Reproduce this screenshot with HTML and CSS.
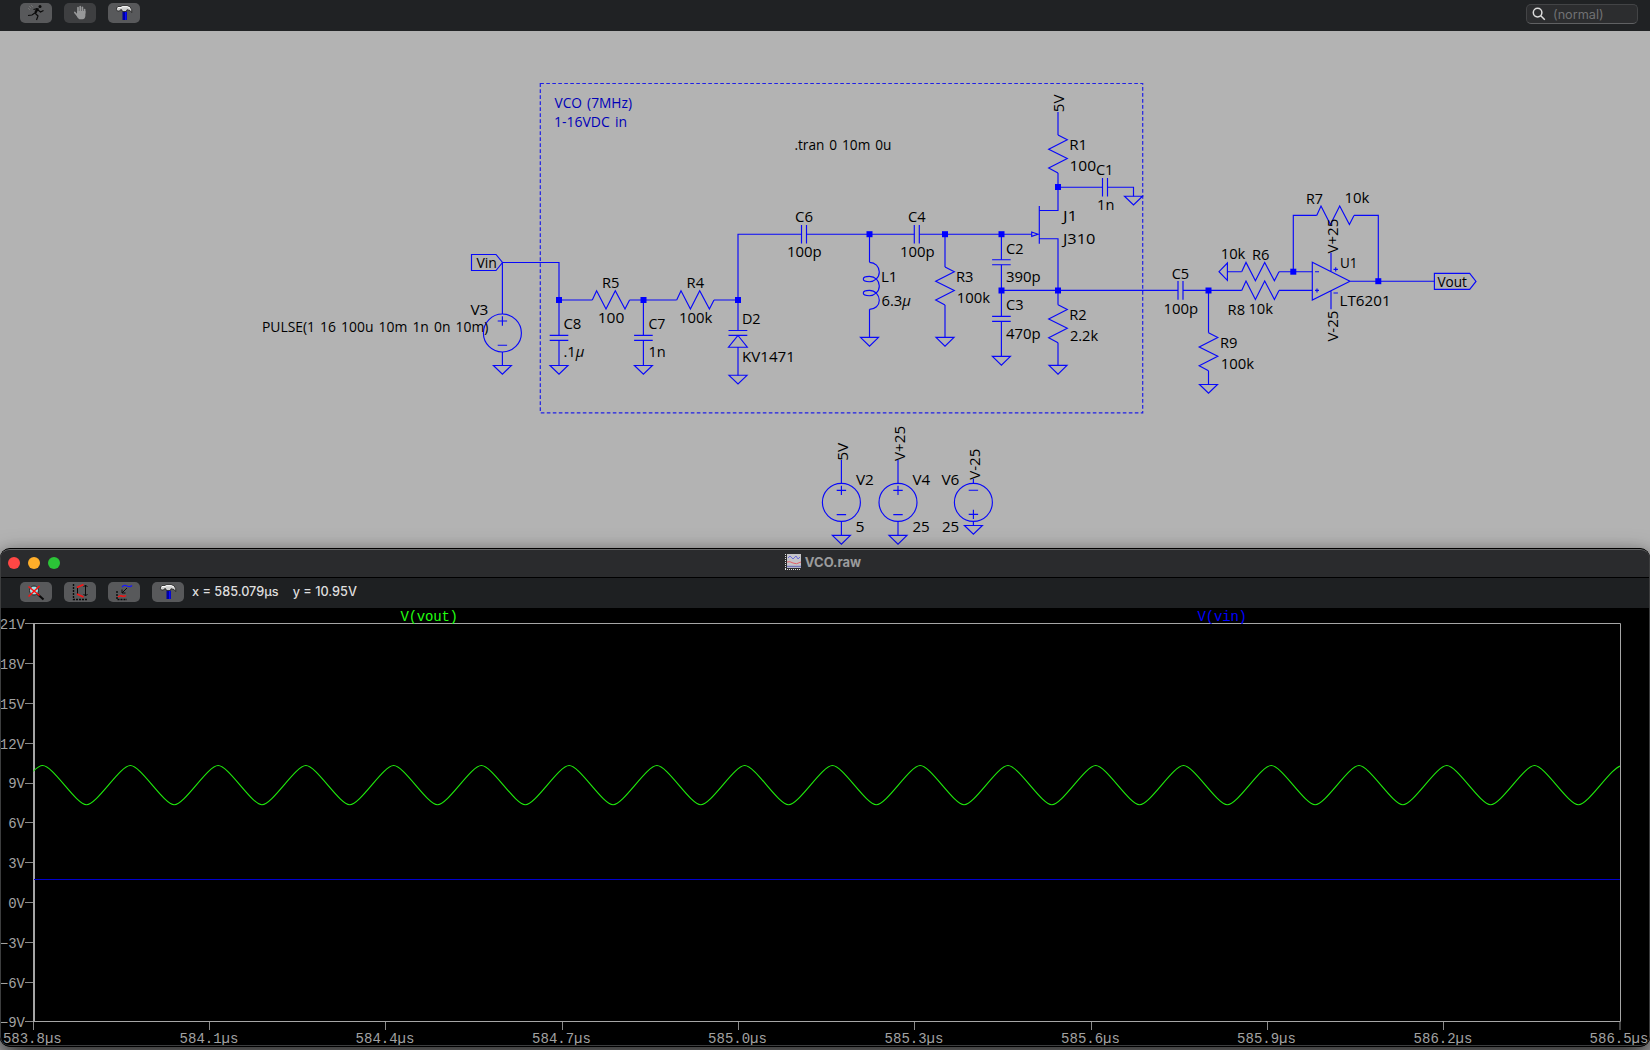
FILE: index.html
```html
<!DOCTYPE html>
<html lang="en">
<head>
<meta charset="utf-8">
<title>VCO</title>
<link rel="stylesheet" href="styles.css">
</head>
<body>
<svg class="defs" width="0" height="0" aria-hidden="true">
  <defs>
    <path id="gnd" d="M-9 0H9L0 8.7Z"/>
    <rect id="dot" x="-3" y="-3" width="6" height="6"/>
    <path id="resh" d="M0 0L4.3-9.3 13.7 9 23-9.3 32.7 9 37.3 0"/>
    <path id="resv" d="M0 0L9.3 4.8-9.3 14.2 9.3 23.6-9.3 33 0 38"/>
    <path id="caph" d="M0-9.3V9.3M5-9.3V9.3"/>
    <path id="capv" d="M-9.3 0H9.3M-9.3 5H9.3"/>
    <g id="src"><circle r="19"/><path d="M-4.7-12H4.7M0-16.7V-7.3M-4.7 12.2H4.7"/></g>
    <g id="hammer">
      <path d="M14.500 8.500h4.500v8.500h-4.500z" fill="#0000a0"/><path d="M17 9h1.500v8H17z" fill="#0a0aff"/>
      <path d="M8.500 5l1.500-1.500h3l1.500-.8h4.500q4 .5 4.700 4v2.800l-1.700-2-3-.8-.8 1.800h-3.700l-.8-1.800h-1.200l-1 1.300h-2l-1-1.300z" fill="#cfcfcf" stroke="#111" stroke-width=".7"/>
      <path d="M10 4.500h3l1.500-.8h5l2.500 1.500" fill="none" stroke="#fff"/>
    </g>
  </defs>
</svg>

<header class="toolbar">
  <div class="tools">
    <button class="tool" aria-label="Run"><svg viewBox="0 0 32 20">
      <g fill="none" stroke="#0b0b0b" stroke-width="1.200"><path d="M18.500 5.500L15 10.500M17.500 5.500L13.500 6.500M18 7l2.500 2 3-1.500M15.500 9.500L12 12l-4 .5M15.500 10.500L18 13l-1.500 4"/><path d="M17.500 5.500L15.500 9.500" stroke-width="2.400"/></g>
      <circle cx="20" cy="3.500" r="1.500" fill="#0b0b0b"/><path d="M9 3l2 2M11 2l2 2M8 5l2 2" stroke="#777" stroke-width=".8"/></svg></button>
    <button class="tool off" aria-label="Halt"><svg viewBox="0 0 32 20">
      <g fill="none" stroke="#979899" stroke-width="1.700" stroke-linecap="round"><path d="M14 9V4.500M16.200 8.500V3.500M18.400 9V4.300M20.600 10V6.500M10.800 9.500l3 3.500"/></g>
      <path d="M13.200 8h8.200v4.500q0 3.500-3 3.800h-3q-1.500-.5-2.700-3.300z" fill="#979899"/></svg></button>
    <button class="tool" aria-label="Control panel"><svg viewBox="0 0 32 20"><use href="#hammer"/></svg></button>
  </div>
  <div class="search">
    <svg viewBox="0 0 14 14"><circle cx="5.600" cy="5.600" r="4.300"/><path d="M8.800 8.800L12.800 12.800"/></svg>
    <span>(normal)</span>
  </div>
</header>

<main class="sheet">
<svg class="schematic" viewBox="0 31 1650 519">
  <rect class="frame" x="540.300" y="83.500" width="602.400" height="329.300"/>
  <g class="wire">
    <path d="M471.500 254.500H496L502.500 262.500 496 270.500H471.500Z"/>
    <path d="M502.400 314V262.500H559V335.300M559 340.300V365.500M502.400 352V365.500"/>
    <path d="M559 300H592.300M629.600 300H676.700M714 300H738M643.400 300V335.300M643.400 340.300V365.500"/>
    <path d="M801.500 234.200H738V330.500M738 347V375.500M728.500 330.500H747.300M728.500 335.400H747.300M738 335.500L747.300 347.200H728.500Z"/>
    <path d="M806.500 234.200H914.300M919.300 234.200H1031.700M869.500 234V262.300M869.500 309.300V337.300M945 234V267M945 305V337.300"/>
    <path d="M869.500 262.300C875 262.300 879.300 266.600 879.300 272 879.300 278 874 281.700 869.500 281.700 865.500 281.700 863.300 280.500 863.300 279 863.300 277.500 866 276.300 869.500 276.300 875 276.300 879.300 280.500 879.300 286 879.300 292 874 295.700 869.500 295.700 865.500 295.700 863.300 294.500 863.300 293 863.300 291.500 866 290.300 869.500 290.300 875 290.300 879.300 295 879.300 300.300 879.300 305.500 875 309.300 869.500 309.300"/>
    <path d="M1001.400 234V259.800M1001.400 264.800V316.400M1001.400 321.400V356.300M1001.400 290.400H1178M1183 290.400H1241.700"/>
    <path d="M1031.700 232V236.400L1038 234.200ZM1039.300 206V243.700M1039.300 210.500H1058V173M1058 135V112M1039.300 238.700H1058V304.700M1058 342.700V365.500"/>
    <path d="M1058 187.200H1102.500M1107.500 187.200H1133.500V196.200"/>
    <path d="M1208.500 290V332.700M1208.500 370.700V384.400M1227.400 271.700H1241.700M1227.400 263V280.300L1219 271.700ZM1279 271.700H1312.300M1279 290.400H1312.300"/>
    <path d="M1293.300 271.700V215.400H1316.700M1354 215.400H1378.300V281.200M1312.300 262.300L1350 281.200 1312.300 300ZM1350 281.200H1434.300M1331 252.700V271.700M1331 290.400V309.300"/>
    <path d="M1315 271.700h4M1315 290.400h4M1317 288.400v4M1333.500 269.300h4.400M1335.700 267.200v4.300M1333.500 293h4.400"/>
    <path d="M1434.400 273.400H1469.700L1476 281.400 1469.700 289.400H1434.400Z"/>
    <path d="M841.400 460V483.400M841.400 521.400V535.300M898 460V483.400M898 521.400V535.300M973.400 479V483.400M973.400 521.400V525.500"/>
    <use href="#src" x="502.400" y="333"/><use href="#src" x="841.400" y="502.400"/><use href="#src" x="898" y="502.400"/>
    <use href="#src" transform="translate(973.400 502.400) scale(1 -1)"/>
    <use href="#resh" x="592.300" y="300"/><use href="#resh" x="676.700" y="300"/><use href="#resh" x="1241.700" y="271.700"/><use href="#resh" x="1241.700" y="290.400"/><use href="#resh" x="1316.700" y="215.400"/>
    <use href="#resv" x="1058" y="135"/><use href="#resv" x="945" y="267"/><use href="#resv" x="1058" y="304.700"/><use href="#resv" x="1208.500" y="332.700"/>
    <use href="#caph" x="801.500" y="234.300"/><use href="#caph" x="914.300" y="234.300"/><use href="#caph" x="1102.500" y="187.200"/><use href="#caph" x="1178" y="290.400"/>
    <use href="#capv" x="559" y="335.400"/><use href="#capv" x="643.400" y="335.400"/><use href="#capv" x="1001.400" y="259.700"/><use href="#capv" x="1001.400" y="316.400"/>
    <use href="#gnd" x="502.400" y="365.500"/><use href="#gnd" x="559" y="365.500"/><use href="#gnd" x="643.400" y="365.500"/><use href="#gnd" x="738" y="375.300"/><use href="#gnd" x="869.500" y="337.400"/><use href="#gnd" x="945" y="337.400"/><use href="#gnd" x="1001.400" y="356.400"/><use href="#gnd" x="1058" y="365.400"/><use href="#gnd" x="1133.500" y="196.200"/><use href="#gnd" x="1208.500" y="384.500"/><use href="#gnd" x="841.400" y="535.400"/><use href="#gnd" x="898" y="535.400"/><use href="#gnd" x="973.400" y="525.500"/>
  </g>
  <g class="dots">
    <use href="#dot" x="559" y="300"/><use href="#dot" x="643.500" y="300"/><use href="#dot" x="738" y="300"/><use href="#dot" x="869.500" y="234.200"/><use href="#dot" x="945" y="234.200"/><use href="#dot" x="1001.500" y="234.200"/><use href="#dot" x="1001.500" y="290.500"/><use href="#dot" x="1058" y="290.500"/><use href="#dot" x="1058" y="187"/><use href="#dot" x="1208.500" y="290.500"/><use href="#dot" x="1293.300" y="271.700"/><use href="#dot" x="1378.300" y="281.200"/>
  </g>
  <g class="note">
    <text x="554.500" y="108.300" textLength="77.500" lengthAdjust="spacingAndGlyphs">VCO (7MHz)</text>
    <text x="554" y="127.300" textLength="73" lengthAdjust="spacingAndGlyphs">1-16VDC in</text>
  </g>
  <g class="label" transform="translate(.4 .2)">
    <text x="794" y="150" textLength="97" lengthAdjust="spacingAndGlyphs">.tran 0 10m 0u</text>
    <text x="470" y="315.300" textLength="18" lengthAdjust="spacingAndGlyphs">V3</text>
    <text x="261.500" y="331.700" textLength="226.500" lengthAdjust="spacingAndGlyphs">PULSE(1 16 100u 10m 1n 0n 10m)</text>
    <text x="476" y="268" textLength="20.500" lengthAdjust="spacingAndGlyphs">Vin</text>
    <text x="563" y="329.300" textLength="18" lengthAdjust="spacingAndGlyphs">C8</text>
    <text x="563" y="357" textLength="21" lengthAdjust="spacingAndGlyphs">.1<tspan class="mu">µ</tspan></text>
    <text x="601.500" y="288" textLength="17.500" lengthAdjust="spacingAndGlyphs">R5</text>
    <text x="597.300" y="323" textLength="26.700" lengthAdjust="spacingAndGlyphs">100</text>
    <text x="648" y="329.300" textLength="17" lengthAdjust="spacingAndGlyphs">C7</text>
    <text x="648" y="357.300" textLength="17.300" lengthAdjust="spacingAndGlyphs">1n</text>
    <text x="686.200" y="288" textLength="17.500" lengthAdjust="spacingAndGlyphs">R4</text>
    <text x="678.700" y="323" textLength="33.300" lengthAdjust="spacingAndGlyphs">100k</text>
    <text x="741.500" y="324.300" textLength="18.700" lengthAdjust="spacingAndGlyphs">D2</text>
    <text x="741.500" y="362.300" textLength="53" lengthAdjust="spacingAndGlyphs">KV1471</text>
    <text x="794.600" y="222.300" textLength="18" lengthAdjust="spacingAndGlyphs">C6</text>
    <text x="786.500" y="257.300" textLength="34.700" lengthAdjust="spacingAndGlyphs">100p</text>
    <text x="907.600" y="222.300" textLength="17.600" lengthAdjust="spacingAndGlyphs">C4</text>
    <text x="899.500" y="257.300" textLength="34.700" lengthAdjust="spacingAndGlyphs">100p</text>
    <text x="1068.800" y="150" textLength="18" lengthAdjust="spacingAndGlyphs">R1</text>
    <text x="1069" y="171" textLength="26.700" lengthAdjust="spacingAndGlyphs">100</text>
    <text x="1095.500" y="175" textLength="17.500" lengthAdjust="spacingAndGlyphs">C1</text>
    <text x="1096.700" y="210" textLength="17.300" lengthAdjust="spacingAndGlyphs">1n</text>
    <text x="1062.500" y="221" textLength="14.500" lengthAdjust="spacingAndGlyphs">J1</text>
    <text x="1062.500" y="244" textLength="32.500" lengthAdjust="spacingAndGlyphs">J310</text>
    <text x="1005.600" y="254" textLength="17.500" lengthAdjust="spacingAndGlyphs">C2</text>
    <text x="1005.600" y="282.300" textLength="34.700" lengthAdjust="spacingAndGlyphs">390p</text>
    <text x="1005.600" y="310.300" textLength="17.500" lengthAdjust="spacingAndGlyphs">C3</text>
    <text x="1005.600" y="339.300" textLength="34.700" lengthAdjust="spacingAndGlyphs">470p</text>
    <text x="880.500" y="282" textLength="16.500" lengthAdjust="spacingAndGlyphs">L1</text>
    <text x="881" y="306" textLength="29.500" lengthAdjust="spacingAndGlyphs">6.3<tspan class="mu">µ</tspan></text>
    <text x="955.500" y="282" textLength="17.500" lengthAdjust="spacingAndGlyphs">R3</text>
    <text x="956.300" y="303" textLength="33.300" lengthAdjust="spacingAndGlyphs">100k</text>
    <text x="1068.800" y="320" textLength="17.500" lengthAdjust="spacingAndGlyphs">R2</text>
    <text x="1069.500" y="341" textLength="28.300" lengthAdjust="spacingAndGlyphs">2.2k</text>
    <text x="1305.500" y="204" textLength="17" lengthAdjust="spacingAndGlyphs">R7</text>
    <text x="1344" y="203" textLength="25" lengthAdjust="spacingAndGlyphs">10k</text>
    <text x="1220.300" y="258.700" textLength="24.700" lengthAdjust="spacingAndGlyphs">10k</text>
    <text x="1251.500" y="260" textLength="17.500" lengthAdjust="spacingAndGlyphs">R6</text>
    <text x="1171.300" y="279" textLength="17.500" lengthAdjust="spacingAndGlyphs">C5</text>
    <text x="1163" y="314" textLength="34.700" lengthAdjust="spacingAndGlyphs">100p</text>
    <text x="1227.200" y="314.700" textLength="17.500" lengthAdjust="spacingAndGlyphs">R8</text>
    <text x="1248" y="314" textLength="24.700" lengthAdjust="spacingAndGlyphs">10k</text>
    <text x="1339.500" y="268" textLength="17.500" lengthAdjust="spacingAndGlyphs">U1</text>
    <text x="1339.200" y="306" textLength="51" lengthAdjust="spacingAndGlyphs">LT6201</text>
    <text x="1219.500" y="348" textLength="17.500" lengthAdjust="spacingAndGlyphs">R9</text>
    <text x="1220.300" y="369" textLength="33.300" lengthAdjust="spacingAndGlyphs">100k</text>
    <text x="1437" y="287" textLength="29.500" lengthAdjust="spacingAndGlyphs">Vout</text>
    <text x="855.500" y="485" textLength="18" lengthAdjust="spacingAndGlyphs">V2</text>
    <text x="855" y="532" textLength="9" lengthAdjust="spacingAndGlyphs">5</text>
    <text x="912" y="485" textLength="17.700" lengthAdjust="spacingAndGlyphs">V4</text>
    <text x="912" y="532" textLength="17.300" lengthAdjust="spacingAndGlyphs">25</text>
    <text x="941" y="485" textLength="18" lengthAdjust="spacingAndGlyphs">V6</text>
    <text x="941.500" y="532" textLength="17.300" lengthAdjust="spacingAndGlyphs">25</text>
    <text transform="translate(1064 112) rotate(-90)" textLength="17.700" lengthAdjust="spacingAndGlyphs">5V</text>
    <text transform="translate(1337.400 253.400) rotate(-90)" textLength="35" lengthAdjust="spacingAndGlyphs">V+25</text>
    <text transform="translate(1337.400 341.400) rotate(-90)" textLength="31" lengthAdjust="spacingAndGlyphs">V-25</text>
    <text transform="translate(848 460.500) rotate(-90)" textLength="18" lengthAdjust="spacingAndGlyphs">5V</text>
    <text transform="translate(904.700 460.700) rotate(-90)" textLength="35" lengthAdjust="spacingAndGlyphs">V+25</text>
    <text transform="translate(980 479.500) rotate(-90)" textLength="31" lengthAdjust="spacingAndGlyphs">V-25</text>
  </g>
</svg>
</main>

<section class="window">
  <div class="titlebar">
    <div class="lights"><i class="close"></i><i class="min"></i><i class="max"></i></div>
    <div class="title">
      <svg viewBox="0 0 16 16"><path d="M2 0h14v14H2z" fill="#c4c4c8"/><path d="M3 4l2-2 3 3 3-3 2 3 2-2" fill="none" stroke="#6a6ad8"/><path d="M2 8q3-1 6 1t8-1" fill="none" stroke="#e0606a"/><path d="M2 12.500h14" stroke="#7474b8" stroke-width="1.500"/><path d="M.5 0v16M0 15.500h16" stroke="#ddd" stroke-dasharray="1 1"/></svg>
      <span>VCO.raw</span>
    </div>
  </div>
  <div class="toolbar plotbar">
    <div class="tools">
      <button class="tool" aria-label="Zoom to fit"><svg viewBox="0 0 32 20"><circle cx="14" cy="8.500" r="4.500" fill="#9fe3ea" stroke="#222"/><path d="M17.500 12l6 5.500" stroke="#0a0a0a" stroke-width="2"/><path d="M8.500 4.500l11 9M19.500 4L8.500 14.500" stroke="#f11" stroke-width="1.500"/></svg></button>
      <button class="tool" aria-label="Autorange"><svg viewBox="0 0 32 20"><path d="M9.500 2v15.500H24" fill="none" stroke="#0a0a0a" stroke-width="1.400" stroke-dasharray="2 1"/><path d="M21.500 3v11M19.500 5l2-2 2 2M19.500 12l2 2 2-2M13.500 6v6" fill="none" stroke="#0a0a0a"/><path d="M13 5.500l6.500-3M13 12l6.500 3" stroke="#f11" stroke-width="1.400"/></svg></button>
      <button class="tool" aria-label="Pick trace"><svg viewBox="0 0 32 20"><path d="M9 9v8.500h10" fill="none" stroke="#0a0a0a" stroke-width="1.400" stroke-dasharray="2 1"/><path d="M19 6l-5 5M14 7.500V11h3.500" fill="none" stroke="#0a0a0a"/><path d="M14 5q2-2.500 5-1t5-.5" fill="none" stroke="#1616ff" stroke-width="1.300"/><path d="M10 15q2-2 4-1t4-.5" fill="none" stroke="#f11" stroke-width="1.400"/></svg></button>
      <button class="tool" aria-label="Control panel"><svg viewBox="0 0 32 20"><use href="#hammer"/></svg></button>
    </div>
    <div class="readout"><span>x = 585.079µs</span><span>y = 10.95V</span></div>
  </div>
  <svg class="plot" viewBox="0 608 1650 438">
    <clipPath id="area"><rect x="33.500" y="624" width="1586.500" height="397"/></clipPath>
    <path class="axis faint" d="M25 623.500h9M25 663.500h9M25 703.500h9M25 743.500h9M25 783.500h9M25 822.500h9M25 862.500h9M25 902.500h9M25 942.500h9M25 982.500h9M25 1021.500h9"/>
    <path class="axis faint" d="M33.500 1022v8M209.500 1022v8M385.500 1022v8M562.500 1022v8M738.500 1022v8M914.500 1022v8M1091.500 1022v8M1267.500 1022v8M1443.500 1022v8M1620 1022v8"/>
    <path class="axis" d="M34 623.500H1620.500V1021.500H34"/>
    <path class="axis left" d="M34 623V1022"/>
    <path class="vin" d="M34 879.500H1620"/>
    <path class="vout" clip-path="url(#area)"/>
    <g class="traces">
      <text class="t-vout" x="400.500" y="621" textLength="57.500">V(vout)</text>
      <text class="t-vin" x="1197.500" y="621" textLength="49.500">V(vin)</text>
    </g>
    <g class="ylab">
      <text x="25" y="628.500">21V</text><text x="25" y="668.500">18V</text><text x="25" y="708.500">15V</text><text x="25" y="748.500">12V</text><text x="25" y="788">9V</text><text x="25" y="827.500">6V</text><text x="25" y="867.500">3V</text><text x="25" y="907.500">0V</text><text x="25" y="947.500">−3V</text><text x="25" y="987.500">−6V</text><text x="25" y="1026.500">−9V</text>
    </g>
    <g class="xlab">
      <text x="32.300" y="1043">583.8µs</text><text x="209" y="1043">584.1µs</text><text x="385" y="1043">584.4µs</text><text x="561.500" y="1043">584.7µs</text><text x="737.500" y="1043">585.0µs</text><text x="914" y="1043">585.3µs</text><text x="1090.500" y="1043">585.6µs</text><text x="1266.500" y="1043">585.9µs</text><text x="1443" y="1043">586.2µs</text><text x="1619" y="1043">586.5µs</text>
    </g>
  </svg>
</section>
<script src="trace.js"></script>
</body>
</html>
```
FILE: trace.js
```js
// Builds the periodic V(vout) curve: one peak-to-trough half per segment.
const half = 43.88;
const swing = 39.2;
let d = `M${42.6 - 2 * half} 765.5`;
for (let i = 0; i < 40; i++) {
  const y = i % 2 ? -swing : swing;
  d += `c10.5 0 33.4 ${y} ${half} ${y}`;
}
document.querySelector('.vout').setAttribute('d', d);
```
FILE: styles.css
```css
* { box-sizing: border-box; }
body {
  margin: 0;
  width: 1650px;
  height: 1050px;
  overflow: hidden;
  display: flex;
  flex-direction: column;
  background: #b3b3b3;
  font: 13px Inter, "Liberation Sans", sans-serif;
}
.defs { position: absolute; }
.toolbar {
  height: 31px;
  flex: none;
  display: flex;
  justify-content: space-between;
  align-items: flex-start;
  padding: 3px 12px 0 20px;
  background: #202224;
}
.tools { display: flex; gap: 12px; }
.tool {
  width: 32px;
  height: 20px;
  padding: 0;
  border: 0;
  border-radius: 5px;
  background: #58595b;
}
.tool.off { background: #3e3f41; }
.tool svg { display: block; width: 32px; height: 20px; }
.search {
  width: 112px;
  height: 20px;
  margin-top: 1px;
  padding: 0 6px 0 5px;
  display: flex;
  align-items: center;
  gap: 7px;
  border: 1px solid #434446;
  border-bottom-color: #606163;
  border-radius: 5px;
  background: #2c2d2f;
  color: #707173;
}
.search svg { width: 14px; height: 14px; fill: none; stroke: #dcdcdc; stroke-width: 1.5; }
.search span { font-size: 12.7px; }

.sheet { flex: 1; min-height: 0; }
.schematic { display: block; width: 1650px; height: 519px; }
.wire { fill: none; stroke: #0808fa; stroke-width: 1.15; }
.dots { fill: #0000ff; }
.frame { fill: none; stroke: #2020e6; stroke-width: 1.2; stroke-dasharray: 3.6 2.4; }
.label, .note { font: 14px "Open Sans", "Noto Sans", sans-serif; word-spacing: 1.5px; fill: #000; }
.note { fill: #0000b8; }
.mu { font-style: italic; }

.window {
  position: absolute;
  left: 0;
  top: 548px;
  width: 1650px;
  height: 499px;
  display: flex;
  flex-direction: column;
  border: 1px solid #000;
  border-width: 1px 0;
  border-radius: 10px;
  overflow: hidden;
  background: #000;
  box-shadow: 0 16px 30px rgba(0, 0, 0, .68), 0 0 12px rgba(0, 0, 0, .2);
}
.window::after {
  content: "";
  position: absolute;
  inset: 0;
  border: 1px solid #3c3d3e;
  border-top-color: #666768;
  border-radius: 9px;
  pointer-events: none;
}
.titlebar {
  height: 29px;
  display: grid;
  grid-template-columns: 1fr auto 1fr;
  align-items: center;
  background: #2a2b2d;
  border-bottom: 1px solid #000;
}
.lights { display: flex; gap: 8px; padding-left: 8px; }
.lights i { width: 12px; height: 12px; border-radius: 50%; }
.close { background: #ff4745; }
.min { background: #ffae2a; }
.max { background: #2bc437; }
.title { display: flex; align-items: center; gap: 4px; margin: 0 0 2px -4px; color: #9b9c9d; font-weight: 700; }
.title svg { width: 16px; height: 16px; }
.plotbar { height: 30px; justify-content: flex-start; gap: 8px; padding-top: 4px; background: #1e2022; }
.readout { display: flex; gap: 14px; line-height: 20px; font-size: 12.7px; font-weight: 500; color: #dedede; }
.plot { display: block; width: 1650px; height: 438px; background: #000; }
.axis { fill: none; stroke: #a6a6a6; stroke-width: 1; }
.axis.left { stroke-width: 2; }
.axis.faint { stroke: #8a8a8a; }
.vin { stroke: #0000cc; }
.vout { fill: none; stroke: #1fe80c; stroke-width: 1.15; }
.traces, .ylab, .xlab { font: 14px "Liberation Mono", monospace; }
.t-vout { fill: #22ff11; }
.t-vin { fill: #0000ff; }
.ylab, .xlab { fill: #a2a2a2; }
.ylab { text-anchor: end; }
.xlab { text-anchor: middle; }
```
